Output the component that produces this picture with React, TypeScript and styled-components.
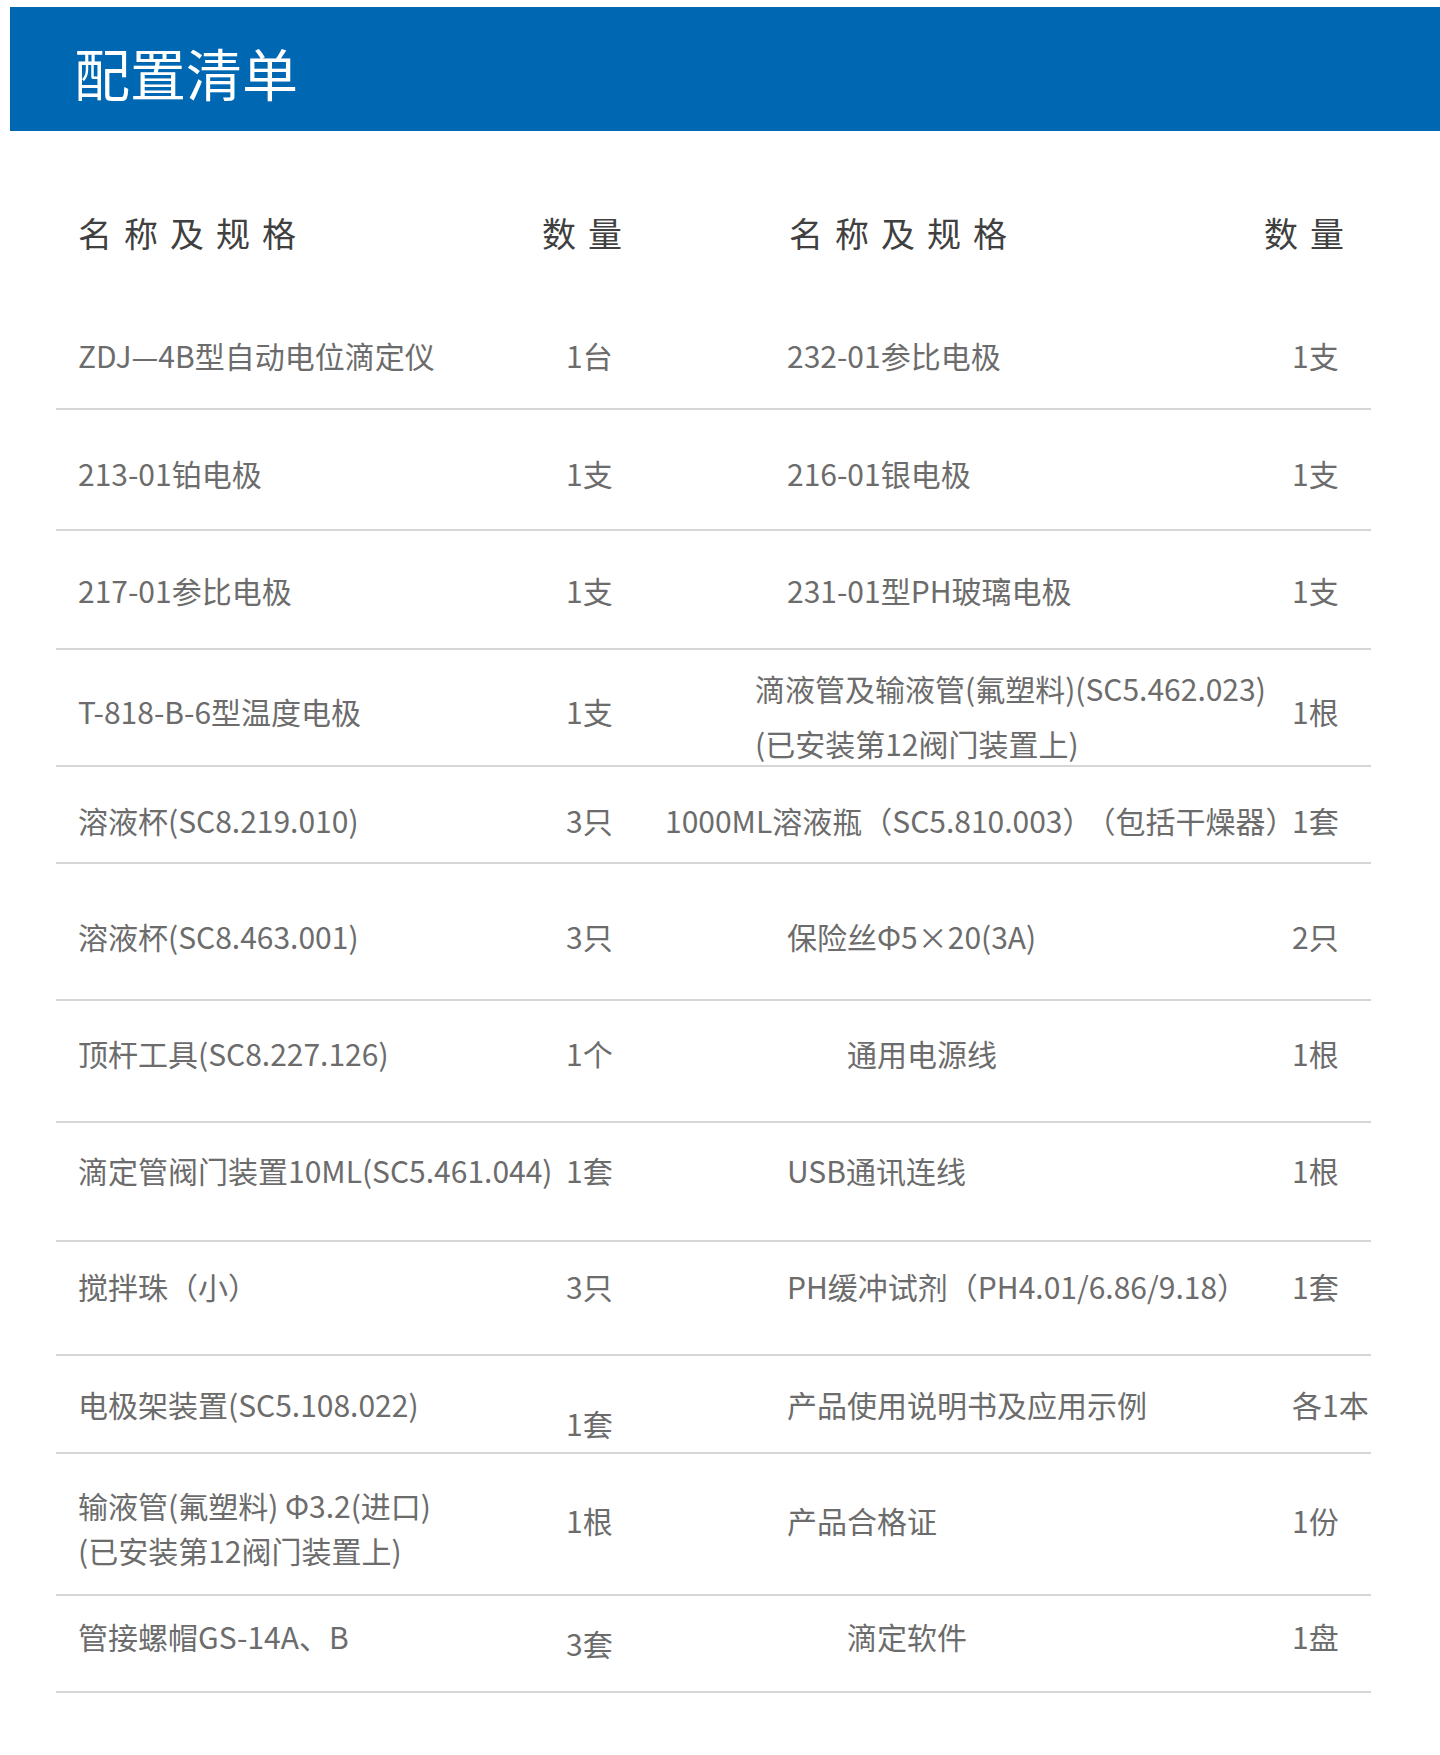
import React from 'react';
import styled, { createGlobalStyle } from 'styled-components';

const GlobalStyle = createGlobalStyle`
    html,
    body {
        margin: 0;
        padding: 0;
        background: #fff;
    }

    body {
        font-family: 'Noto Sans CJK SC', 'Noto Sans', sans-serif;
    }
`;

const Page = styled.div`
    width: 1440px;
    min-height: 1755px;
    padding-top: 7px;
    box-sizing: border-box;
    background: #fff;
`;

const Banner = styled.header`
    display: flex;
    align-items: center;
    height: 124px;
    margin-left: 10px;
    padding: 6px 0 0 64px;
    box-sizing: border-box;
    background: #0068b3;
`;

const Title = styled.h1`
    margin: 0;
    font-size: 56px;
    font-weight: 400;
    line-height: 1;
    color: #fff;
`;

const Table = styled.section`
    width: 1315px;
    margin-left: 56px;
`;

const HeaderRow = styled.div`
    display: grid;
    grid-template-columns: 464px 247px 475px 1fr;
    align-items: center;
    height: 169px;
    padding: 35px 0 0 22px;
    box-sizing: border-box;
`;

const HeaderCell = styled.div`
    font-size: 34px;
    line-height: 40px;
    letter-spacing: 12px;
    color: #404040;
    white-space: nowrap;
`;

const Row = styled.div<{ $height: number; $shift: number }>`
    display: grid;
    grid-template-columns: 510px 94px 632px 1fr;
    align-items: center;
    height: ${p => p.$height}px;
    padding-top: ${p => Math.max(0, p.$shift * 2)}px;
    padding-bottom: ${p => Math.max(0, -p.$shift * 2)}px;
    box-sizing: border-box;
    border-bottom: 2px solid #d6d6d6;
`;

const Cell = styled.div<{ $indent?: number; $lineHeight?: number; $shift?: number }>`
    padding-left: ${p => p.$indent ?? 0}px;
    margin-top: ${p => Math.max(0, (p.$shift ?? 0) * 2)}px;
    margin-bottom: ${p => Math.max(0, -(p.$shift ?? 0) * 2)}px;
    font-size: 30px;
    line-height: ${p => p.$lineHeight ?? 40}px;
    color: #6c6c6c;
    white-space: nowrap;
`;

const Line = styled.span`
    display: block;
`;

const Note = styled.span`
    margin-left: 8px;
`;

type Text = React.ReactNode | string[];

interface Item {
    height: number;
    shift: number;
    left: [Text, string];
    right: [Text, string];
    leftShift?: number;
    leftLineHeight?: number;
    leftQtyShift?: number;
    rightIndent?: number;
    rightShift?: number;
    rightLineHeight?: number;
}

const items: Item[] = [
    { height: 110, shift: 1, left: ['ZDJ—4B型自动电位滴定仪', '1台'], right: ['232-01参比电极', '1支'] },
    { height: 121, shift: 3.5, left: ['213-01铂电极', '1支'], right: ['216-01银电极', '1支'] },
    { height: 119, shift: 0.5, left: ['217-01参比电极', '1支'], right: ['231-01型PH玻璃电极', '1支'] },
    {
        height: 117,
        shift: -2.5,
        left: ['T-818-B-6型温度电极', '1支'],
        right: [['滴液管及输液管(氟塑料)(SC5.462.023)', '(已安装第12阀门装置上)'], '1根'],
        rightIndent: 95,
        rightLineHeight: 55,
        rightShift: 5.5,
    },
    {
        height: 97,
        shift: 5.5,
        left: ['溶液杯(SC8.219.010)', '3只'],
        right: [
            <>
                1000ML溶液瓶（SC5.810.003）<Note>（包括干燥器）</Note>
            </>,
            '1套',
        ],
        rightIndent: 5,
    },
    { height: 137, shift: 4.5, left: ['溶液杯(SC8.463.001)', '3只'], right: ['保险丝Φ5×20(3A)', '2只'] },
    {
        height: 122,
        shift: -8,
        left: ['顶杆工具(SC8.227.126)', '1个'],
        right: ['通用电源线', '1根'],
        rightIndent: 187,
    },
    { height: 119, shift: -11.5, left: ['滴定管阀门装置10ML(SC5.461.044)', '1套'], right: ['USB通讯连线', '1根'] },
    { height: 114, shift: -12, left: ['搅拌珠（小）', '3只'], right: ['PH缓冲试剂（PH4.01/6.86/9.18）', '1套'] },
    {
        height: 98,
        shift: 0,
        left: ['电极架装置(SC5.108.022)', '1套'],
        leftQtyShift: 19,
        right: ['产品使用说明书及应用示例', '各1本'],
    },
    {
        height: 142,
        shift: -4,
        left: [['输液管(氟塑料) Φ3.2(进口)', '(已安装第12阀门装置上)'], '1根'],
        leftLineHeight: 45,
        leftShift: 7.5,
        right: ['产品合格证', '1份'],
    },
    {
        height: 97,
        shift: -7.5,
        left: ['管接螺帽GS-14A、B', '3套'],
        leftQtyShift: 7,
        right: ['滴定软件', '1盘'],
        rightIndent: 187,
    },
];

const renderText = (text: Text) =>
    Array.isArray(text) ? text.map(line => <Line key={line}>{line}</Line>) : text;

const App = () => (
    <Page>
        <GlobalStyle />
        <Banner>
            <Title>配置清单</Title>
        </Banner>
        <Table>
            <HeaderRow>
                <HeaderCell>名称及规格</HeaderCell>
                <HeaderCell>数量</HeaderCell>
                <HeaderCell>名称及规格</HeaderCell>
                <HeaderCell>数量</HeaderCell>
            </HeaderRow>
            {items.map((item, i) => (
                <Row key={i} $height={item.height} $shift={item.shift}>
                    <Cell $indent={22} $lineHeight={item.leftLineHeight} $shift={item.leftShift}>
                        {renderText(item.left[0])}
                    </Cell>
                    <Cell $shift={item.leftQtyShift}>{item.left[1]}</Cell>
                    <Cell
                        $indent={item.rightIndent ?? 127}
                        $lineHeight={item.rightLineHeight}
                        $shift={item.rightShift}
                    >
                        {renderText(item.right[0])}
                    </Cell>
                    <Cell>{item.right[1]}</Cell>
                </Row>
            ))}
        </Table>
    </Page>
);

export default App;
